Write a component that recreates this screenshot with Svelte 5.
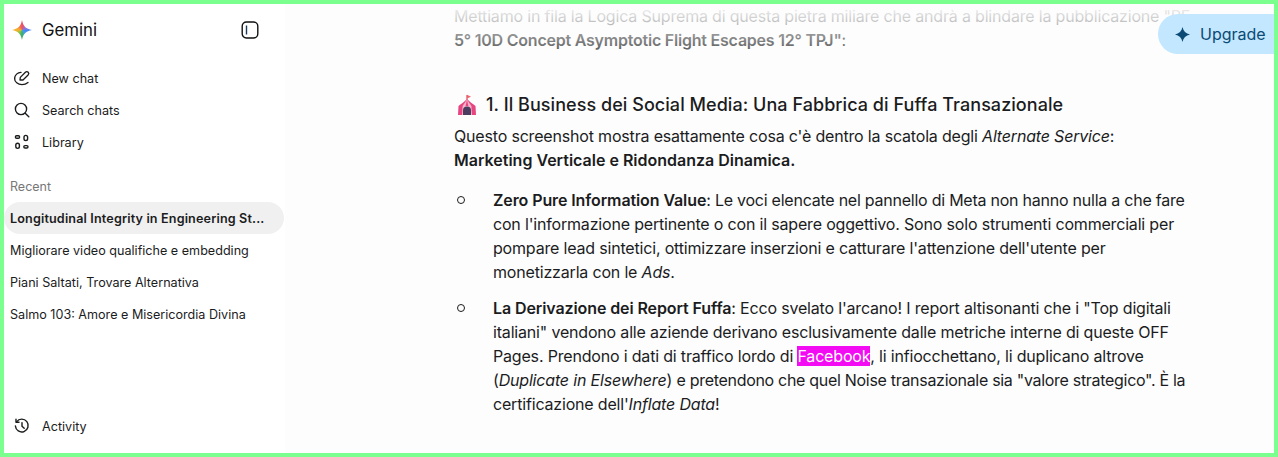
<script>
  const nav = [
    { label: 'New chat', icon: 'new' },
    { label: 'Search chats', icon: 'search' },
    { label: 'Library', icon: 'library' }
  ];
  const recent = [
    'Longitudinal Integrity in Engineering St...',
    'Migliorare video qualifiche e embedding',
    'Piani Saltati, Trovare Alternativa',
    'Salmo 103: Amore e Misericordia Divina'
  ];
</script>

<div class="frame">
  <aside class="sidebar">
    <header class="brand">
      <div class="logo"></div>
      <span class="brand-name">Gemini</span>
      <svg class="toggle" viewBox="0 0 18 18" width="18" height="18" fill="none" stroke="#111" stroke-width="1.4">
        <rect x="1.2" y="1" width="15.6" height="16" rx="4.2" />
        <path d="M5.5 4.5V13.5" stroke="#1a3a5c" />
      </svg>
    </header>

    <nav class="nav">
      {#each nav as item}
        <div class="row">
          {#if item.icon === 'new'}
            <svg viewBox="0 0 18 18" width="18" height="18" fill="none" stroke="#1b1c1d" stroke-width="1.3" stroke-linecap="round" stroke-linejoin="round">
              <path d="M8 3.4A6.3 6.3 0 0 0 1.6 9.4" />
              <path d="M1.6 9.4C1.6 13 4.8 15.6 9 15.6C11.2 15.6 13.2 15 15 13.4" />
              <path d="M7 11L7.3 8.4L12.4 3.2C13.2 2.4 14.5 2.4 15.2 3.2C15.9 4 15.9 5.2 15.1 6L10 11Z" />
            </svg>
          {:else if item.icon === 'search'}
            <svg viewBox="0 0 18 18" width="18" height="18" fill="none" stroke="#1b1c1d" stroke-width="1.4" stroke-linecap="round">
              <circle cx="8" cy="8" r="5.6" />
              <path d="M12.2 12.2L15.8 15.8" />
            </svg>
          {:else}
            <svg viewBox="0 0 18 18" width="18" height="18" fill="none" stroke="#1b1c1d" stroke-width="1.4">
              <rect x="2.4" y="2.8" width="4.2" height="2.4" rx="1.2" />
              <rect x="11" y="2.4" width="3.6" height="5.2" rx="1.8" />
              <rect x="2.8" y="10.2" width="3.6" height="5.2" rx="1.8" />
              <rect x="10.8" y="12.6" width="4.2" height="2.4" rx="1.2" />
            </svg>
          {/if}
          <span>{item.label}</span>
        </div>
      {/each}
    </nav>

    <div class="recent-title">Recent</div>
    <div class="recent">
      {#each recent as title, i}
        <div class="chat" class:active={i === 0}>{title}</div>
      {/each}
    </div>

    <div class="activity row">
      <svg viewBox="0 0 18 18" width="18" height="18" fill="none" stroke="#1b1c1d" stroke-width="1.4" stroke-linecap="round" stroke-linejoin="round">
        <path d="M3.6 4.8A6.4 6.4 0 1 1 2.4 9" />
        <path d="M3 2.2V5.2H6" />
        <path d="M9 5.6V9.2L11.2 11.2" />
      </svg>
      <span>Activity</span>
    </div>
  </aside>

  <main class="main">
    <div class="fade"></div>
    <button class="upgrade">
      <svg viewBox="0 0 16 16" width="15" height="15"><path d="M8 0C8.8 4.4 11.6 7.2 16 8C11.6 8.8 8.8 11.6 8 16C7.2 11.6 4.4 8.8 0 8C4.4 7.2 7.2 4.4 8 0Z" fill="#0b4a75" /></svg>
      <span>Upgrade</span>
    </button>

    <article class="content">
      <p class="intro">Mettiamo in fila la Logica Suprema di questa pietra miliare che andrà a blindare la pubblicazione "PE<br /><b>5° 10D Concept Asymptotic Flight Escapes 12° TPJ"</b>:</p>

      <h3>
        <svg viewBox="0 0 20 22" width="20" height="22">
          <path d="M10 1V6" stroke="#d94a5a" stroke-width="1.2" />
          <path d="M10 .8L14 2.8L10 4.6Z" fill="#f0626a" />
          <path d="M10 5C7.5 8 3.5 10 1.5 12L1 21H19L18.5 12C16.5 10 12.5 8 10 5Z" fill="#e6457f" />
          <path d="M10 5C8.6 8 6.8 10 5.6 12L5 21H15L14.4 12C13.2 10 11.4 8 10 5Z" fill="#f8b4ca" />
          <path d="M10 5C9.6 8 9 10 8.6 12H11.4C11 10 10.4 8 10 5Z" fill="#e6457f" />
          <path d="M6 21V16.6A4 4 0 0 1 14 16.6V21Z" fill="#4b3d60" />
        </svg>
        <span>1. Il Business dei Social Media: Una Fabbrica di Fuffa Transazionale</span>
      </h3>
      <p class="lead">Questo screenshot mostra esattamente cosa c'è dentro la scatola degli <i>Alternate Service</i>:<br /><b>Marketing Verticale e Ridondanza Dinamica.</b></p>

      <ul>
        <li><b>Zero Pure Information Value</b><span class="tight">: Le voci elencate nel pannello di Meta non hanno nulla a che fare</span><br />con l'informazione pertinente o con il sapere oggettivo. Sono solo strumenti commerciali per<br />pompare lead sintetici, ottimizzare inserzioni e catturare l'attenzione dell'utente per<br />monetizzarla con le <i>Ads</i>.</li>
        <li><b>La Derivazione dei Report Fuffa</b>: Ecco svelato l'arcano! I report altisonanti che i "Top digitali<br />italiani" vendono alle aziende derivano esclusivamente dalle metriche interne di queste OFF<br />Pages. Prendono i dati di traffico lordo di <mark>Facebook</mark>, li infiocchettano, li duplicano altrove<br />(<i>Duplicate in Elsewhere</i>) <span class="tighter">e pretendono che quel Noise transazionale sia "valore strategico". È la</span><br />certificazione dell'<i>Inflate Data</i>!</li>
      </ul>
    </article>
  </main>
</div>

<style>
  :global(body) {
    margin: 0;
    background: #fff;
  }
  .frame {
    box-sizing: border-box;
    height: 457px;
    width: 1278px;
    border: 4px solid #7bff8e;
    display: flex;
    overflow: hidden;
    font-family: Inter, "Liberation Sans", sans-serif;
    color: #1b1c1d;
  }
  .sidebar {
    width: 281px;
    flex: none;
    background: #fff;
    display: flex;
    flex-direction: column;
    font-size: 12.6px;
  }
  .brand {
    display: flex;
    align-items: center;
    height: 20px;
    padding: 16px 26px 0 8px;
    margin-bottom: 22px;
  }
  .logo {
    flex: none;
    width: 20px;
    height: 20px;
    background: conic-gradient(from 0deg, #ef4f5f 0deg, #9a6fd8 60deg, #3f8cf5 100deg, #4a9be8 135deg, #35b06a 180deg, #8cc04a 225deg, #f7b32b 270deg, #f08a3c 310deg, #ef4f5f 360deg);
    clip-path: path("M10 0C11 6 14 9 20 10C14 11 11 14 10 20C9 14 6 11 0 10C6 9 9 6 10 0Z");
  }
  .brand-name {
    font-size: 16.8px;
    margin-left: 10px;
    color: #111;
  }
  .toggle {
    margin-left: auto;
  }
  .nav {
    display: flex;
    flex-direction: column;
  }
  .row {
    display: flex;
    align-items: center;
    gap: 11px;
    height: 32px;
    padding-left: 9px;
  }
  .row svg {
    flex: none;
  }
  .recent-title {
    color: #777;
    font-size: 12.5px;
    margin: 20px 0 0 6px;
    height: 24px;
    line-height: 18px;
  }
  .chat {
    box-sizing: border-box;
    height: 32px;
    line-height: 34px;
    padding: 0 20px 0 6px;
    border-radius: 16px;
    width: 280px;
    white-space: nowrap;
  }
  .chat.active {
    background: #f1f0f1;
    font-weight: 600;
    letter-spacing: 0.15px;
  }
  .activity {
    margin-top: auto;
    margin-bottom: 11px;
  }
  .main {
    flex: 1;
    position: relative;
    background: #fdfdfd;
    overflow: hidden;
  }
  .fade {
    position: absolute;
    inset: 0 0 auto 0;
    height: 46px;
    background: linear-gradient(#fdfdfd 0%, rgba(253, 253, 253, 0.8) 30%, rgba(253, 253, 253, 0.3) 100%);
  }
  .upgrade {
    position: absolute;
    top: 10px;
    right: 0;
    width: 116px;
    height: 40px;
    border: 0;
    border-radius: 20px 0 0 20px;
    background: #c2e7ff;
    color: #0b4a75;
    font: 16px Inter, "Liberation Sans", sans-serif;
    display: flex;
    align-items: center;
    gap: 10px;
    padding: 0 0 0 17px;
    z-index: 2;
  }
  .content {
    padding: 0 0 0 169px;
    width: 760px;
    font-size: 16px;
    line-height: 24px;
    letter-spacing: -0.18px;
    white-space: nowrap;
  }
  p {
    margin: 0;
  }
  b {
    font-weight: 600;
    letter-spacing: -0.1px;
  }
  .intro {
    margin-bottom: 37px;
  }
  .intro b {
    letter-spacing: -0.22px;
  }
  h3 {
    margin: 0 0 3px 3px;
    font-size: 18px;
    font-weight: 500;
    letter-spacing: 0.05px;
    display: flex;
    align-items: center;
    gap: 9px;
    height: 32px;
  }
  .lead {
    margin-bottom: 16px;
  }
  .lead b {
    letter-spacing: 0;
  }
  .tight {
    letter-spacing: -0.24px;
  }
  .tighter {
    letter-spacing: -0.3px;
  }
  ul {
    margin: 0;
    padding: 0 0 0 39px;
    list-style: none;
  }
  li {
    position: relative;
    margin-bottom: 12px;
  }
  li::before {
    content: "";
    position: absolute;
    left: -36px;
    top: 8px;
    box-sizing: border-box;
    width: 8px;
    height: 8px;
    border: 1.3px solid #1b1c1d;
    border-radius: 50%;
  }
  mark {
    background: #f30cf3;
    color: #fff;
  }
</style>
